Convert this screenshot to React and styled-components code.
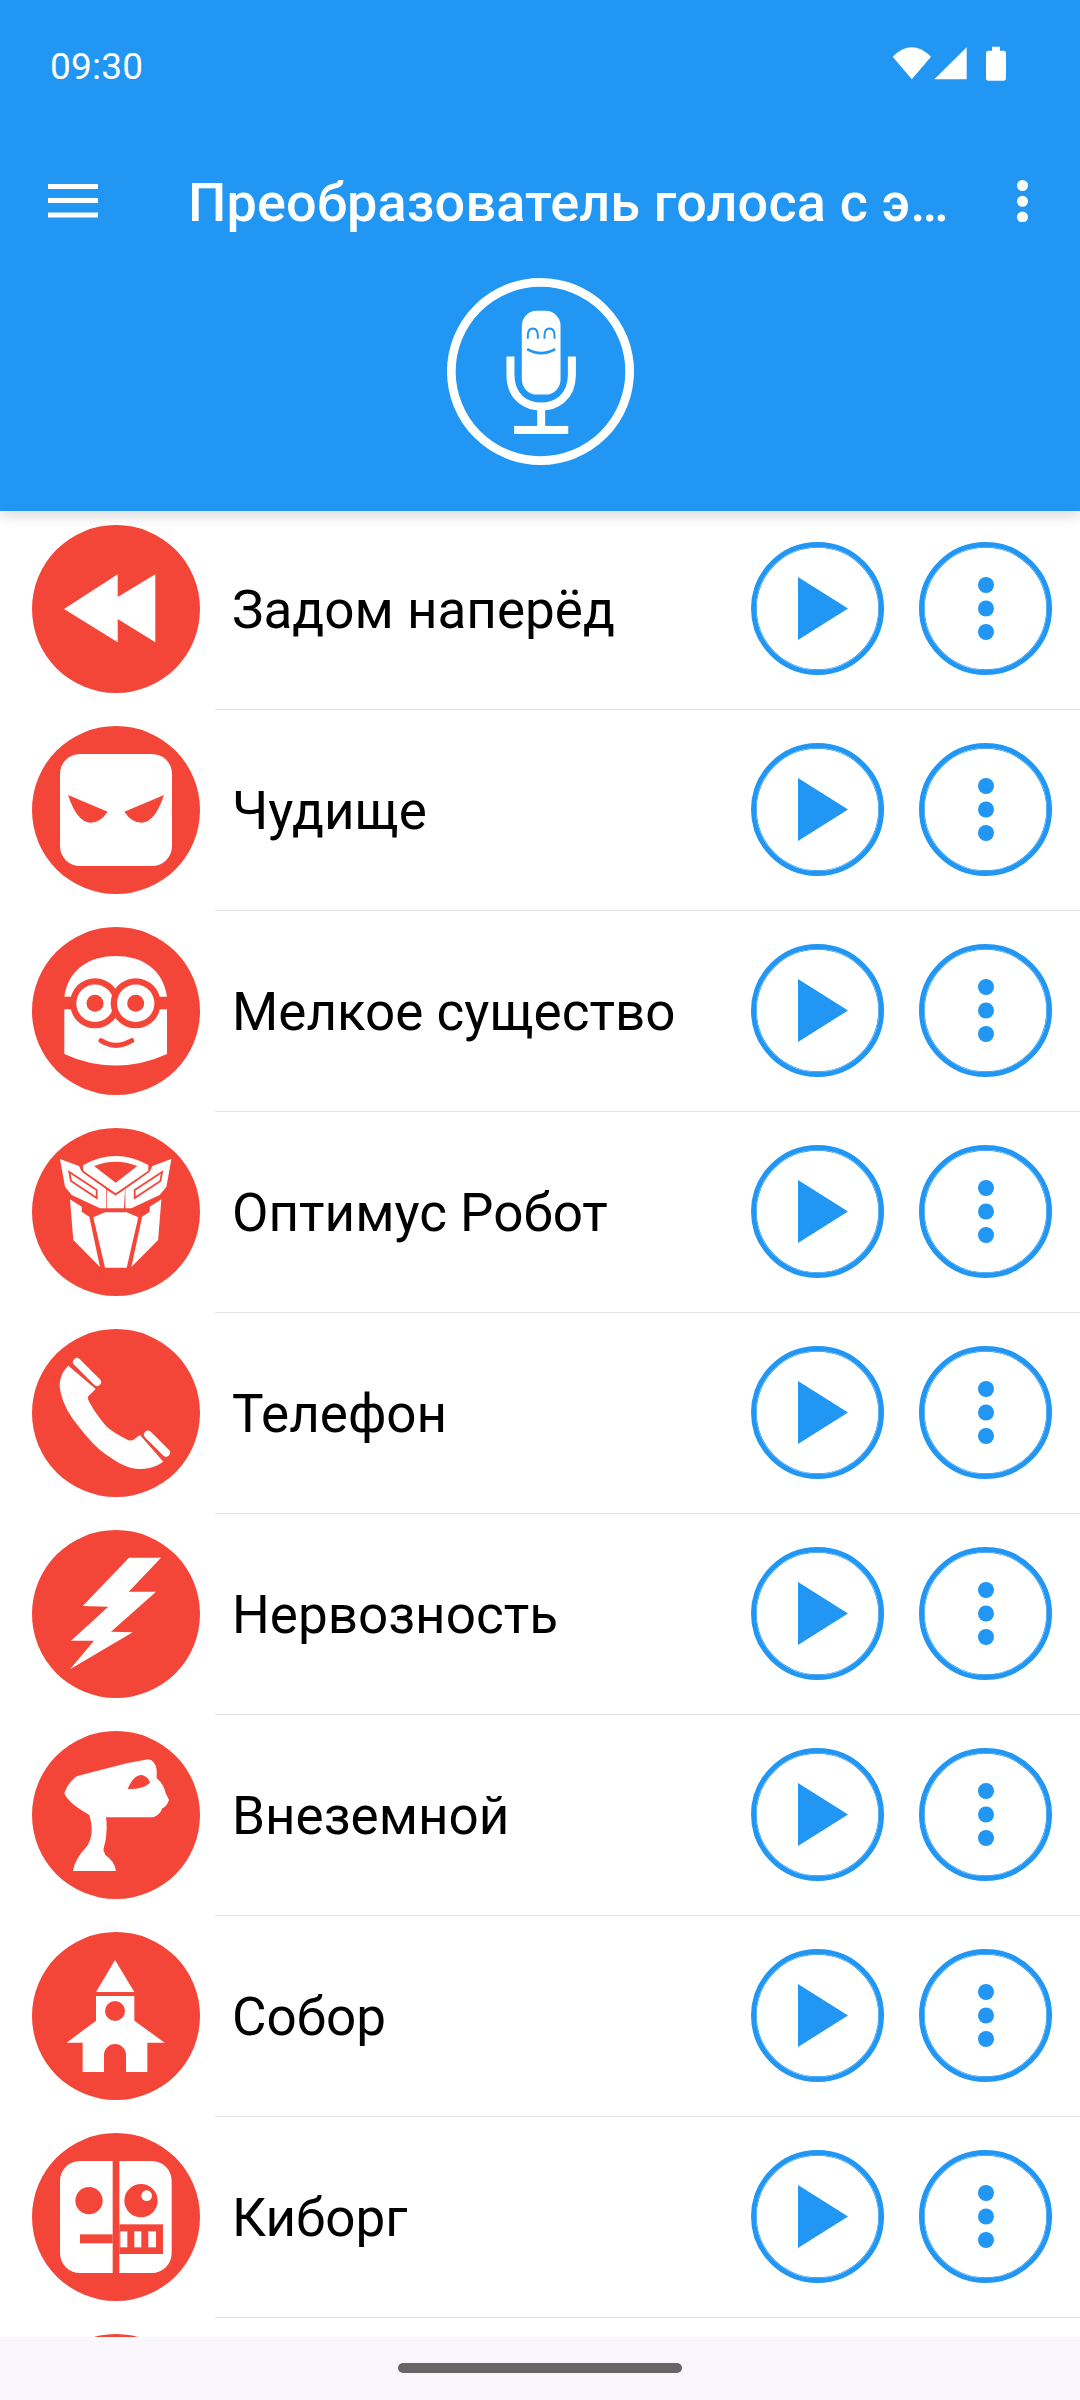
import React from "react";
import styled, { createGlobalStyle } from "styled-components";

const BLUE = "#2196F3";
const RED = "#F44638";

const Global = createGlobalStyle`
  html, body { margin: 0; padding: 0; background: #fff; }
  body { font-family: Roboto, "Liberation Sans", sans-serif; }
  * { box-sizing: border-box; }
`;

const Screen = styled.div`
  width: 1080px;
  height: 2400px;
  display: flex;
  flex-direction: column;
  overflow: hidden;
  background: #fff;
`;
const Header = styled.header`
  position: relative;
  z-index: 2;
  height: 511px;
  flex: none;
  background: ${BLUE};
  color: #fff;
  display: flex;
  flex-direction: column;
  box-shadow: 0 4px 14px rgba(0, 0, 0, 0.16);
`;
const StatusBar = styled.div`
  height: 132px;
  padding: 0 70px 0 50px;
  display: flex;
  align-items: center;
  justify-content: space-between;
`;
const Clock = styled.span`
  font-size: 37px;
  letter-spacing: 0.2px;
`;
const StatusIcons = styled.div`
  display: flex;
  align-items: center;
`;
const Toolbar = styled.div`
  height: 138px;
  display: flex;
  align-items: center;
  padding: 0 0 0 48px;
`;
const IconButton = styled.div`
  flex: none;
  display: flex;
  align-items: center;
  justify-content: center;
  margin-left: ${(p) => p.$gap || 0}px;
`;
const Title = styled.h1`
  margin: 3px 0 0 90px;
  width: 760px;
  flex: none;
  font-size: 54px;
  font-weight: 500;
  letter-spacing: 0.17px;
  white-space: nowrap;
`;
const MicRow = styled.div`
  display: flex;
  justify-content: center;
  padding-top: 8px;
`;
const List = styled.main`
  flex: 1;
  margin-top: -2px;
  overflow: hidden;
`;
const Row = styled.div`
  height: 201px;
  display: flex;
  align-items: center;
  padding: 0 28px 1px 32px;
  position: relative;
  &::after {
    content: "";
    position: absolute;
    left: 215px;
    right: 0;
    bottom: 0;
    height: 1px;
    background: #e2e2e2;
  }
`;
const Avatar = styled.svg`
  flex: none;
  width: 168px;
  height: 168px;
  display: block;
`;
const Label = styled.span`
  flex: 1;
  margin-left: 32px;
  margin-top: 1px;
  font-size: 53px;
  color: #000;
  white-space: nowrap;
`;
const RoundButton = styled.div`
  flex: none;
  width: 133px;
  height: 133px;
  margin-left: ${(p) => p.$gap || 0}px;
  margin-top: -1px;
  border-radius: 50%;
  border: 5px solid ${BLUE};
  box-shadow: inset 0 0 0 0.7px ${BLUE};
  display: flex;
  align-items: center;
  justify-content: center;
`;
const NavBar = styled.footer`
  position: relative;
  z-index: 3;
  height: 63px;
  flex: none;
  background: #F9F7FD;
  display: flex;
  justify-content: center;
  padding-top: 26px;
`;
const Handle = styled.div`
  width: 284px;
  height: 10px;
  border-radius: 5px;
  background: #666666;
`;
const Glyph = styled.svg`
  display: block;
  flex: none;
`;
const PlayGlyph = styled(Glyph)`
  margin-left: 11px;
`;

const Circle = ({ vb, children }) => {
  const [x, y, s] = vb || [0, 0, 168];
  return (
    <Avatar viewBox={`${x} ${y} ${s} ${s}`}>
      <circle cx={x + s / 2} cy={y + s / 2} r={s / 2} fill={RED} />
      {children}
    </Avatar>
  );
};

const Rewind = () => (
  <Circle>
    <polygon fill="#fff" points="32,84 85.7,49.3 85.7,72 123.3,49.3 123.3,117.3 85.7,94 85.7,117.3" />
  </Circle>
);
const Monster = () => (
  <Circle>
    <rect x="28" y="28" width="112" height="112" rx="20" fill="#fff" />
    <path fill={RED} d="M36 69 L75.7 85.7 Q68 97 58 96.7 Q45 96 36 69Z" />
    <path fill={RED} d="M132 69 L92.3 85.7 Q100 97 110 96.7 Q123 96 132 69Z" />
  </Circle>
);
const Minion = () => (
  <Circle>
    <path fill="#fff" d="M32.3 127 V70 C36 42 58 29 83.7 29 C110 29 131 42 135 70 V127 Q110 138.5 83.7 138.5 Q57 138.5 32.3 127Z" />
    <rect x="30" y="69.7" width="108" height="12.6" fill={RED} />
    {[63, 103.7].map((cx) => (
      <g key={cx}>
        <circle cx={cx} cy="76.3" r="25" fill={RED} />
        <circle cx={cx} cy="76.3" r="18.7" fill="#fff" />
        <circle cx={cx} cy="76.3" r="8.5" fill={RED} />
      </g>
    ))}
    <path d="M69 113.7 Q83.7 123 99.7 113.7" stroke={RED} strokeWidth="5" strokeLinecap="round" fill="none" />
  </Circle>
);
const AutobotSide = () => (
  <>
    <polygon fill="#fff" points="28,31 47,38 50,44 74,61 74,80.3 68,80.3 39.7,67 33,58.7" />
    <path d="M37.3 44 L64.7 62 L64.7 70 L39 53 Z" fill="none" stroke={RED} strokeWidth="1.8" />
    <polygon fill="#fff" points="38,71.3 49.7,78.7 49.7,83.7 57.3,88.7 68,139 41.3,112" />
  </>
);
const Autobot = () => (
  <Circle>
    <AutobotSide />
    <g transform="translate(167.4 0) scale(-1 1)">
      <AutobotSide />
    </g>
    <path fill="#fff" fillRule="evenodd" d="M51.3 37 Q83.7 19 116.3 37 V42.7 L83.7 65.3 L51.3 42.7Z M62 38 Q83.7 29.5 105.3 38 L83.7 54.7Z" />
    <polygon fill="#fff" points="74.7,62 83.7,67.5 93,61.3 92,80.3 74.7,80.3" />
    <polygon fill="#fff" points="61.3,89.3 73,84.3 94.7,84.3 106.3,89.3 94.7,139.7 73,139.7" />
  </Circle>
);
const Phone = () => (
  <Circle>
    <path fill="#fff" d="M36.3 36.7 C29 44 27 52 28 60 C30 72 36 84 43 92.7 C50 102 58 112 68 121 C80 130 94 140 106.3 140 C115 140 124 138 131.3 132.7 L108 106 L101 111 Q98 112.5 94 110 C86 106 80 102 74.7 97.7 C68 90 62 82 56.3 71 Q55 68 57 66.5 L63.7 60Z" />
    <path d="M45 33 L65 53 M116 105.7 L134 123.7" stroke="#fff" strokeWidth="8" strokeLinecap="round" />
  </Circle>
);
const Bolt = () => (
  <Circle>
    <polygon fill="#fff" points="97,27.7 129,27.7 96.7,61.7 124,61.7 79,101.7 100.7,102.3 38,139.3 62,110.7 39,110.7 76.3,76.7 50.7,76" />
  </Circle>
);
const Alien = () => (
  <Circle vb={[96, 93, 504]}>
    <path fill="#fff" d="M193 280 Q205 245 232 228 L380 190 L445 178 Q465 180 470 210 L470 235 Q490 250 497 280 L507 300 Q500 320 487 325 Q480 345 460 352 L318 352 Q325 400 310 450 L316 465 Q345 485 348 513 L219 513 Q222 480 262 437 Q285 400 268 345 Q205 310 193 280Z" />
    <path fill={RED} d="M383 267 Q400 225 425 225 Q445 230 450 248 Q430 268 383 267Z" />
  </Circle>
);
const Church = () => (
  <Circle vb={[96, 696, 504]}>
    <polygon fill="#fff" points="345,780 403,876 288,876" />
    <path fill="#fff" d="M288 888 H403 V962 L494 1028 H442 V1116 H378 V1065 A33 33 0 0 0 312 1065 V1116 H248 V1028 H200 L288 962Z" />
    <circle cx="345" cy="933" r="30" fill={RED} />
  </Circle>
);
const Cyborg = () => (
  <Circle vb={[96, 99, 504]}>
    <rect x="180" y="183" width="335" height="336" rx="60" fill="#fff" />
    <rect x="338" y="183" width="20" height="336" fill={RED} />
    <circle cx="267" cy="302" r="41" fill={RED} />
    <circle cx="423" cy="302" r="50" fill={RED} />
    <circle cx="440" cy="287" r="16" fill="#fff" />
    <rect x="240" y="403" width="98" height="27" fill={RED} />
    <rect x="358" y="373" width="131" height="89" fill={RED} />
    <rect x="361" y="394" width="21" height="48" fill="#fff" />
    <rect x="403" y="394" width="21" height="48" fill="#fff" />
    <rect x="445" y="394" width="23" height="48" fill="#fff" />
  </Circle>
);

const MicIcon = () => (
  <Glyph width="187" height="187" viewBox="80 55 560 560">
    <circle cx="360" cy="335" r="267" fill="none" stroke="#fff" strokeWidth="26" />
    <rect x="304" y="153" width="116" height="251" rx="45" fill="#fff" />
    <path d="M322 237 V228 Q322 206 337 206 Q352 206 352 228 V237 M372 237 V228 Q372 206 387 206 Q402 206 402 228 V237" stroke={BLUE} strokeWidth="6" fill="none" />
    <path d="M320 268 Q362 292 404 268" stroke={BLUE} strokeWidth="8" fill="none" />
    <path d="M270 290 V345 C270 415 320 440 362 440 C404 440 454 415 454 345 V290" stroke="#fff" strokeWidth="24" fill="none" />
    <rect x="350" y="440" width="24" height="60" fill="#fff" />
    <rect x="281" y="498" width="162" height="24" fill="#fff" />
  </Glyph>
);

const StatusGlyphs = () => (
  <Glyph width="120" height="42" viewBox="0 0 120 42">
    <path fill="#fff" d="M2.7 11.7 Q21.8 -7.1 41 11.7 L21.8 34.3Z" />
    <polygon fill="#fff" points="76.7,2.3 76.7,34.3 44.3,34.3" />
    <path fill="#fff" d="M96 8 Q96 5.7 98.5 5.7 H102 V1.7 H110 V5.7 H113.5 Q116 5.7 116 8 V33.5 Q116 35.7 113.5 35.7 H98.5 Q96 35.7 96 33.5Z" />
  </Glyph>
);

const ITEMS = [
  ["Задом наперёд", Rewind],
  ["Чудище", Monster],
  ["Мелкое существо", Minion],
  ["Оптимус Робот", Autobot],
  ["Телефон", Phone],
  ["Нервозность", Bolt],
  ["Внеземной", Alien],
  ["Собор", Church],
  ["Киборг", Cyborg],
];

const Play = () => (
  <PlayGlyph width="50" height="63" viewBox="0 0 50 63">
    <polygon points="0,0 50,31.5 0,63" fill={BLUE} />
  </PlayGlyph>
);
const Dots = ({ fill, r, gap }) => (
  <Glyph width={r * 2} height={r * 2 + gap * 2}>
    {[0, 1, 2].map((i) => (
      <circle key={i} cx={r} cy={r + gap * i} r={r} fill={fill} />
    ))}
  </Glyph>
);

export default function App() {
  return (
    <Screen>
      <Global />
      <Header>
        <StatusBar>
          <Clock>09:30</Clock>
          <StatusIcons>
            <StatusGlyphs />
          </StatusIcons>
        </StatusBar>
        <Toolbar>
          <IconButton>
            <Glyph width="50" height="34">
              <rect y="0" width="50" height="5" fill="#fff" />
              <rect y="14" width="50" height="5" fill="#fff" />
              <rect y="28.5" width="50" height="5" fill="#fff" />
            </Glyph>
          </IconButton>
          <Title>Преобразователь голоса с э…</Title>
          <IconButton $gap={69}>
            <Dots fill="#fff" r={5.5} gap={15.8} />
          </IconButton>
        </Toolbar>
        <MicRow>
          <MicIcon />
        </MicRow>
      </Header>
      <List>
        {ITEMS.map(([name, Icon]) => (
          <Row key={name}>
            <Icon />
            <Label>{name}</Label>
            <RoundButton>
              <Play />
            </RoundButton>
            <RoundButton $gap={35}>
              <Dots fill={BLUE} r={8} gap={23.5} />
            </RoundButton>
          </Row>
        ))}
        <Row>
          <Circle />
        </Row>
      </List>
      <NavBar>
        <Handle />
      </NavBar>
    </Screen>
  );
}
